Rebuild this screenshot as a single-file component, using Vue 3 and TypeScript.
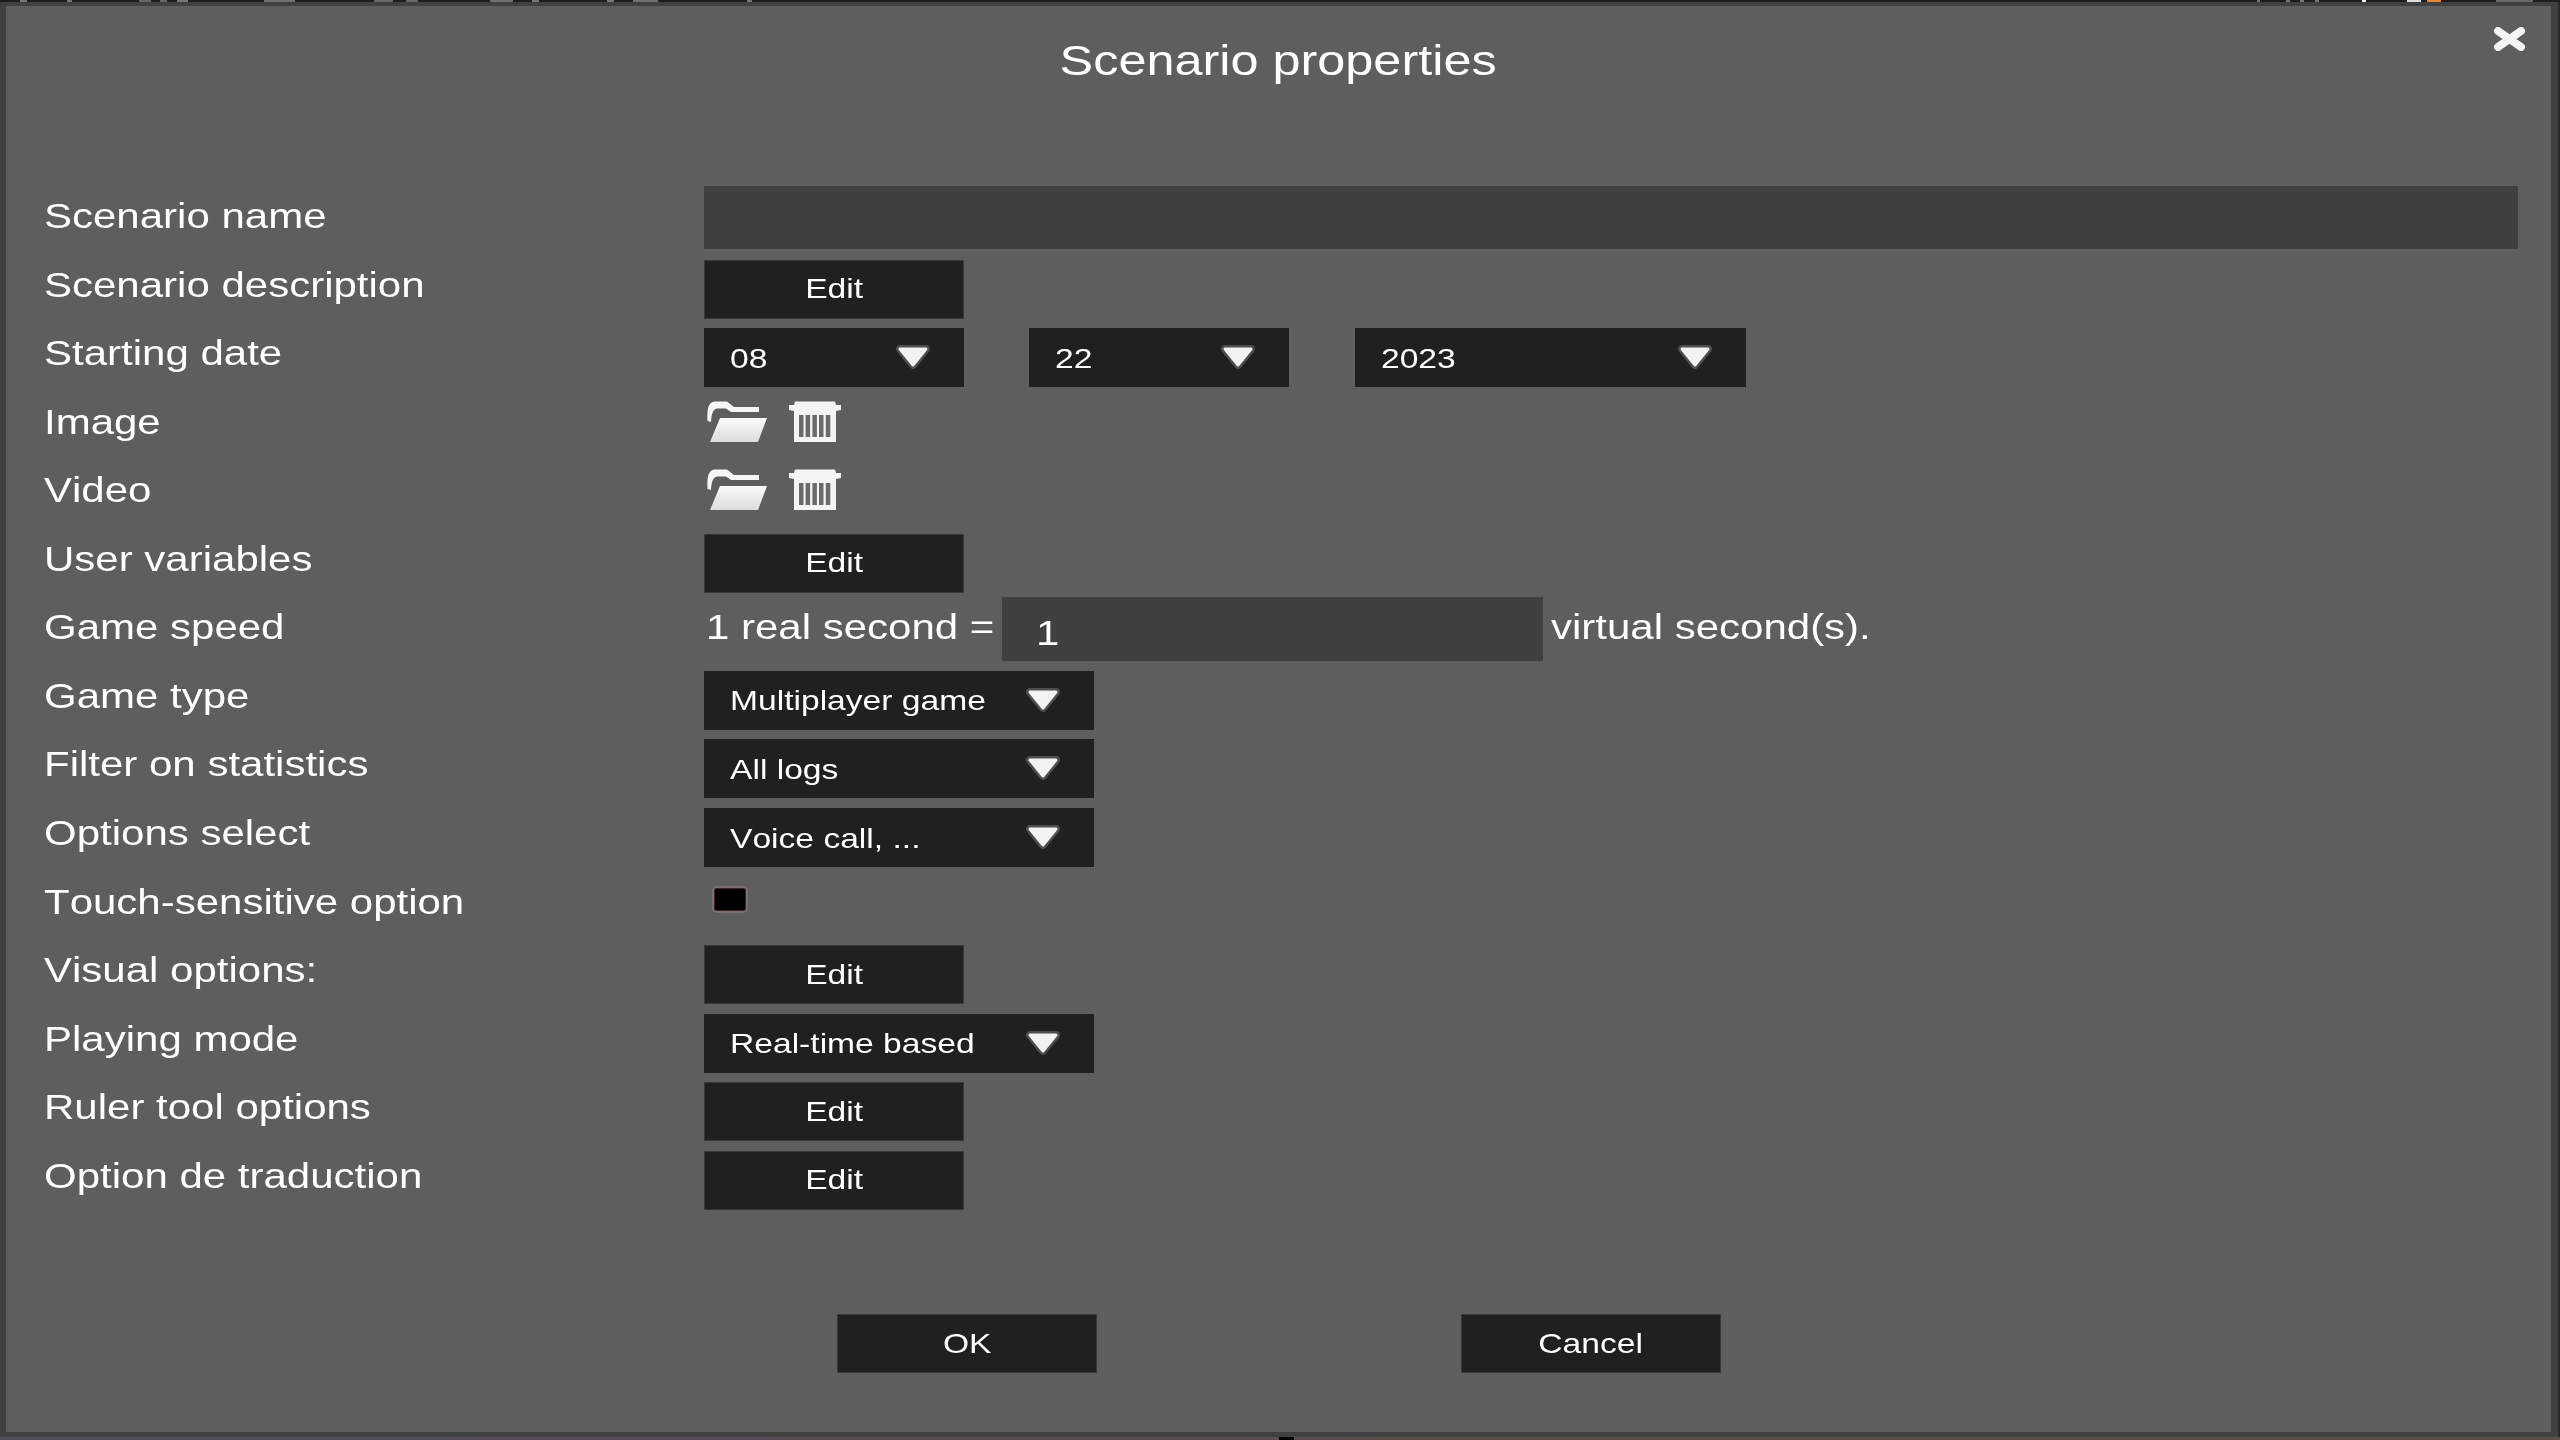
<script setup lang="ts">
type Row =
  | { label: string; kind: 'name' | 'edit' | 'date' | 'files' | 'speed' | 'check' }
  | { label: string; kind: 'select'; value: string }

const rows: Row[] = [
  { label: 'Scenario name', kind: 'name' },
  { label: 'Scenario description', kind: 'edit' },
  { label: 'Starting date', kind: 'date' },
  { label: 'Image', kind: 'files' },
  { label: 'Video', kind: 'files' },
  { label: 'User variables', kind: 'edit' },
  { label: 'Game speed', kind: 'speed' },
  { label: 'Game type', kind: 'select', value: 'Multiplayer game' },
  { label: 'Filter on statistics', kind: 'select', value: 'All logs' },
  { label: 'Options select', kind: 'select', value: 'Voice call, ...' },
  { label: 'Touch-sensitive option', kind: 'check' },
  { label: 'Visual options:', kind: 'edit' },
  { label: 'Playing mode', kind: 'select', value: 'Real-time based' },
  { label: 'Ruler tool options', kind: 'edit' },
  { label: 'Option de traduction', kind: 'edit' },
]

const dates = [
  { value: '08', cls: 'date-month' },
  { value: '22', cls: 'date-day' },
  { value: '2023', cls: 'date-year' },
]

const bits = [
  { at: 20, w: 7, c: '#777' }, { at: 67, w: 5, c: '#777' }, { at: 139, w: 12, c: '#666' },
  { at: 160, w: 7, c: '#666' }, { at: 177, w: 11, c: '#777' }, { at: 264, w: 31, c: '#707070' },
  { at: 374, w: 19, c: '#666' }, { at: 406, w: 12, c: '#666' }, { at: 490, w: 23, c: '#707070' },
  { at: 532, w: 7, c: '#777' }, { at: 607, w: 7, c: '#777' }, { at: 633, w: 25, c: '#707070' },
  { at: 747, w: 5, c: '#777' }, { at: 2257, w: 3, c: '#777' }, { at: 2286, w: 4, c: '#777' },
  { at: 2300, w: 4, c: '#777' }, { at: 2315, w: 4, c: '#777' }, { at: 2362, w: 4, c: '#eee' },
  { at: 2407, w: 14, c: '#ddd' }, { at: 2427, w: 14, c: '#e8813a' }, { at: 2496, w: 37, c: '#666' },
]
</script>

<template>
  <div class="screen">
    <div class="strip">
      <i v-for="b in bits" :key="b.at" class="bit" :style="{ left: b.at + 'px', width: b.w + 'px', background: b.c }"></i>
    </div>
    <div class="dialog">
      <svg class="close" viewBox="0 0 33 24" width="33" height="24" aria-label="Close">
        <path d="M5 4 L28 20 M28 4 L5 20" stroke="#f4f4f4" stroke-width="8" stroke-linecap="round" fill="none" />
      </svg>
      <header class="head"><span class="t t-c title">Scenario properties</span></header>
      <div class="form">
        <div v-for="row in rows" :key="row.label" class="row">
          <div class="label"><span class="t">{{ row.label }}</span></div>
          <div v-if="row.kind === 'name'" class="input name-input"></div>
          <button v-else-if="row.kind === 'edit'" class="btn ctl"><span class="t t-c">Edit</span></button>
          <div v-else-if="row.kind === 'date'" class="ctl date-wrap">
            <div v-for="d in dates" :key="d.value" class="select" :class="d.cls">
              <span class="t">{{ d.value }}</span>
              <svg class="arrow" viewBox="0 0 38 27" width="38" height="27">
                <path d="M6 5 H32 L19 21 Z" fill="#4e4e4e" stroke="#4e4e4e" stroke-width="8" stroke-linejoin="round" />
                <path d="M6 5 H32 L19 21 Z" fill="#f2f2f2" stroke="#f2f2f2" stroke-width="3" stroke-linejoin="round" />
              </svg>
            </div>
          </div>
          <div v-else-if="row.kind === 'files'" class="files">
            <svg class="folder" viewBox="0 0 60 41" width="60" height="41">
              <defs>
                <linearGradient id="fg" x1="0" y1="0" x2="0" y2="1"><stop offset="0" stop-color="#fafafa" /><stop offset="1" stop-color="#dcdcdc" /></linearGradient>
              </defs>
              <path d="M0.5 20 C0 8 1 2 7 0.5 H20 L27 6 H52 V11 H24 L19 7.5 H10 C6 8 4.5 13 4 21 Z" fill="#f6f6f6" />
              <path d="M13 17 H60 L51 41 H3 Z" fill="url(#fg)" />
            </svg>
            <svg class="trash" viewBox="0 0 52 41" width="52" height="41">
              <path d="M6 0.5 H46 L47 4 H52 V9 L47 10 V41 H5 V10 L0 9 V4 H5 Z" fill="#f4f4f4" />
              <g fill="#6a6a6a">
                <rect x="10" y="14" width="4.5" height="22" /><rect x="16.6" y="14" width="4.5" height="22" />
                <rect x="23.4" y="14" width="4.5" height="22" /><rect x="30" y="14" width="4.5" height="22" />
                <rect x="36.8" y="14" width="4.5" height="22" />
              </g>
            </svg>
          </div>
          <div v-else-if="row.kind === 'speed'" class="speed">
            <div class="speed-pre"><span class="t">1 real second =</span></div>
            <div class="input speed-input"><span class="t">1</span></div>
            <span class="t speed-post">virtual second(s).</span>
          </div>
          <div v-else-if="row.kind === 'select'" class="select select-wide ctl">
            <span class="t">{{ row.value }}</span>
            <svg class="arrow" viewBox="0 0 38 27" width="38" height="27">
              <path d="M6 5 H32 L19 21 Z" fill="#4e4e4e" stroke="#4e4e4e" stroke-width="8" stroke-linejoin="round" />
              <path d="M6 5 H32 L19 21 Z" fill="#f2f2f2" stroke="#f2f2f2" stroke-width="3" stroke-linejoin="round" />
            </svg>
          </div>
          <div v-else-if="row.kind === 'check'" class="check"></div>
        </div>
      </div>
      <footer class="foot">
        <button class="btn"><span class="t t-c">OK</span></button>
        <button class="btn"><span class="t t-c">Cancel</span></button>
      </footer>
    </div>
    <div class="under"><i class="under-bit"></i></div>
  </div>
</template>

<style>
html, body { margin: 0; background: #222; }
</style>

<style scoped>
.screen {
  position: relative;
  width: 2560px;
  height: 1440px;
  overflow: hidden;
  background: #2a2a2a;
  font-family: "Liberation Sans", Arial, sans-serif;
  font-kerning: none;
  color: #fff;
}
.strip { position: relative; height: 2px; background: #1d1d1d; }
.bit { position: absolute; top: 0; height: 2px; }
.dialog {
  position: relative;
  box-sizing: border-box;
  width: 2558px;
  height: 1435px;
  background: #5e5e5e;
  border: solid #404040;
  border-width: 4px 7px 5px 6px;
}
.close { position: absolute; top: 21px; right: 25px; filter: blur(0.5px); }
.t { display: inline-block; transform: scaleX(1.2); transform-origin: left center; white-space: nowrap; }
.t-c { transform-origin: center; }
.head { height: 175.2px; box-sizing: border-box; padding-top: 33px; text-align: center; line-height: 44px; }
.title { font-size: 42px; }
.form { display: grid; grid-auto-rows: 68.57px; padding-left: 38px; }
.row { display: flex; align-items: center; min-width: 0; }
.label { width: 660px; flex: none; font-size: 35px; line-height: 40px; margin-top: 1px; }
.input { background: #404040; box-sizing: border-box; }
.name-input { width: 1814px; height: 63px; margin-top: 4px; }
.ctl { margin-top: 10px; }
.btn {
  display: flex;
  align-items: center;
  justify-content: center;
  box-sizing: border-box;
  width: 260px;
  height: 59px;
  padding: 0;
  background: #202020;
  border: 1px solid #383838;
  color: #fff;
  font: 28px "Liberation Sans", Arial, sans-serif;
  font-kerning: none;
}
.select {
  display: flex;
  align-items: center;
  justify-content: space-between;
  box-sizing: border-box;
  height: 59px;
  padding: 0 32px 0 26px;
  background: #202020;
  font-size: 28px;
}
.select .t { padding-top: 2px; }
.select-wide { width: 390px; }
.date-wrap { display: flex; gap: 65px; }
.date-month, .date-day { width: 260px; }
.date-day { margin-right: 1px; }
.date-year { width: 391px; }
.files { display: flex; gap: 22px; padding-left: 3px; }
.folder, .trash { filter: blur(0.5px); }
.speed { display: flex; align-items: center; font-size: 35px; }
.speed-pre { width: 298px; padding-left: 2px; box-sizing: border-box; line-height: 40px; }
.speed-input {
  display: flex;
  align-items: center;
  width: 541px;
  height: 64px;
  margin-top: 4px;
  padding: 8px 0 0 34px;
  font-size: 35px;
}
.speed-post { margin-left: 8px; }
.check {
  box-sizing: border-box;
  width: 36px;
  height: 27px;
  margin: -3px 0 0 8px;
  background: #000;
  border: 2px solid #7a7070;
  box-shadow: inset 0 0 0 1px #3a2828;
  border-radius: 5px;
}
.foot { display: flex; gap: 364px; padding: 104.5px 0 0 831px; }
.under {
  position: relative;
  height: 3px;
  background: linear-gradient(90deg, #50505c, #5c4c4c 60%, #5c4c4c);
}
.under-bit { position: absolute; left: 1279px; top: 0; width: 15px; height: 3px; background: #000; }
</style>
